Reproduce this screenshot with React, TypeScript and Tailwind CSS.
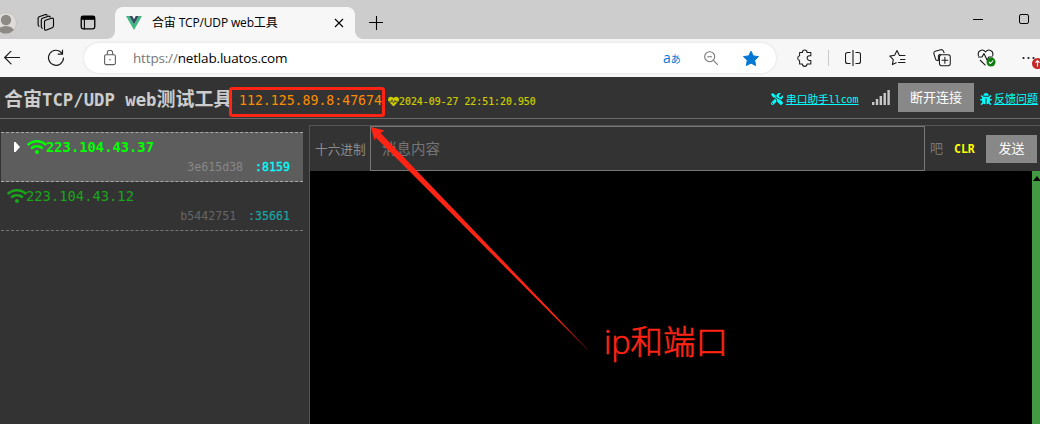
import type { ReactNode } from 'react';
import { FaBug, FaHeartbeat, FaTools, FaWifi } from 'react-icons/fa';

const ui = "font-['Open_Sans','Noto_Sans_CJK_SC',sans-serif]";
const mono = "font-['DejaVu_Sans_Mono','Noto_Sans_CJK_SC',monospace]";

function Icon({ className, children }: { className: string; children: ReactNode }) {
  return (
    <svg viewBox="0 0 20 20" fill="none" stroke="currentColor" strokeWidth="1.15" strokeLinecap="round" strokeLinejoin="round" className={`block shrink-0 ${className}`}>
      {children}
    </svg>
  );
}

function TabBar() {
  return (
    <div className="flex h-[39px] items-start bg-[#cdcdcd] text-black">
      <svg viewBox="0 0 22 22" className="mt-3 -ml-[5px] block size-[22px] shrink-0">
        <defs><clipPath id="avatar"><circle cx="11" cy="11" r="10.5" /></clipPath></defs>
        <circle cx="11" cy="11" r="10.5" fill="#dedbd8" stroke="#c6c3c0" />
        <g clipPath="url(#avatar)" fill="#8d8985">
          <circle cx="11" cy="8" r="5.2" />
          <ellipse cx="11" cy="19.5" rx="8" ry="5.5" />
        </g>
      </svg>
      <svg viewBox="0 0 18 18" fill="none" stroke="currentColor" strokeWidth="1.1" strokeLinecap="round" strokeLinejoin="round" className="mt-[14px] ml-5 block size-[18px] shrink-0">
        <path d="M8.500 6.200 14.500 4.200Q16.500 3.700 16.500 5.500V12Q16.500 13.200 15.200 13.700L9.500 16Q7.500 16.700 7.500 14.700V7.700Q7.500 6.600 8.500 6.200Z" />
        <path d="M5.300 14.300Q4.300 13.800 4.300 12.700V6Q4.300 4.800 5.400 4.300L11.500 2.200Q12.800 1.900 13.200 3" />
        <path d="M2 12.200Q1.100 11.700 1.100 10.500V4.300Q1.100 3.100 2.200 2.700L8.500.600Q9.700.300 10.100 1.300" />
      </svg>
      <Icon className="mt-[14px] ml-[24px] size-[18px]">
        <rect x="2.5" y="2.5" width="15" height="14" rx="2" strokeWidth="1.5" />
        <path d="M2.5 4.5h15" strokeWidth="4" strokeLinecap="butt" />
        <path d="M6 6v10.500" strokeWidth="1.2" />
      </Icon>
      <div className="relative mt-[7px] ml-[18px] flex h-8 w-60 shrink-0 items-center rounded-t-[8px] bg-[#f7f7f7] pl-[11px]">
        <svg viewBox="0 0 8 8" className="absolute bottom-0 -left-2 size-2 text-[#f7f7f7]"><path d="M8 0v8H0a8 8 0 0 0 8-8" fill="currentColor" /></svg>
        <svg viewBox="0 0 8 8" className="absolute -right-2 bottom-0 size-2 text-[#f7f7f7]"><path d="M0 0v8h8a8 8 0 0 1-8-8" fill="currentColor" /></svg>
        <svg viewBox="0 0 16 14" className="block h-[14px] w-4 shrink-0">
          <path d="M0 0h3.2L8 8.3 12.8 0H16L8 14z" fill="#41b883" />
          <path d="M3.2 0h3L8 3.2 9.800 0h3L8 8.300z" fill="#35495e" />
        </svg>
        <span className={`${ui} ml-[10px] w-[182px] shrink-0 text-[12px] tracking-[-0.16px] leading-4 whitespace-nowrap`}>合宙 TCP/UDP web工具</span>
        <svg viewBox="0 0 10 10" className="block h-[10px] w-[10px] shrink-0" stroke="currentColor" strokeWidth="1.1"><path d="m1 1 8 8M9 1 1 9" /></svg>
      </div>
      <svg viewBox="0 0 14 14" className="mt-4 ml-[14px] block size-[14px] shrink-0" stroke="currentColor" strokeWidth="1.1"><path d="M7.500 0v14M0 6.500h14" /></svg>
      <div className="grow" />
      <svg viewBox="0 0 10 10" className="mt-[14px] block size-[10px]" stroke="currentColor"><path d="M0 5.500h10" /></svg>
      <svg viewBox="0 0 10 10" className="mt-[14px] mr-[11px] ml-9 block size-[10px]" stroke="currentColor" fill="none"><rect x=".5" y=".5" width="9" height="9" rx="1.500" /></svg>
    </div>
  );
}

function AddressBar() {
  return (
    <div className="flex h-[38px] items-center bg-[#f7f7f7] text-[#1b1b1b]">
      <svg viewBox="0 0 16 14" fill="none" stroke="currentColor" strokeWidth="1.200" strokeLinecap="round" strokeLinejoin="round" className="ml-1 block h-[14px] w-4 shrink-0"><path d="M15.500 6.500H.7M7 .200.700 6.500 7 12.800" /></svg>
      <svg viewBox="0 0 18 18" fill="none" stroke="currentColor" strokeWidth="1.200" strokeLinecap="round" className="ml-[27px] block size-[18px] shrink-0"><path d="M14.800 4A7.500 7.500 0 1 0 16.500 9M15.500 1v4.200h-4.300" /></svg>
      <div className="ml-[19px] flex h-[30px] w-[692px] shrink-0 items-center rounded-full bg-white shadow-[0_0_3px_rgba(0,0,0,.12)]">
        <svg viewBox="0 0 12 16" fill="none" stroke="#5e5e5e" strokeWidth="1.100" className="ml-5 block h-4 w-3 shrink-0"><rect x=".6" y="4.800" width="10.800" height="9.800" rx="1.500" /><path d="M3.300 4.800V3a2.700 2.700 0 0 1 5.400 0v1.800" /><circle cx="6" cy="9.700" r=".8" fill="#5e5e5e" stroke="none" /></svg>
        <span className={`${ui} ml-[17px] w-[530px] text-[13.500px] leading-5 tracking-[-0.17px] whitespace-nowrap`}><span className="text-[#767676]">https://</span><span className="text-black">netlab.luatos.com</span></span>
        <span className={`${ui} w-[18px] text-[11px] leading-4 whitespace-nowrap text-[#0078d4]`}><span className="text-[14px]">a</span><span className="text-[10px]">あ</span></span>
        <svg viewBox="0 0 14 14" fill="none" stroke="#767676" strokeWidth="1.100" className="ml-[23px] block size-[14px] shrink-0"><circle cx="5.700" cy="5.700" r="5" /><path d="m9.300 9.300 4.500 4.500M3.300 5.700h4.800" /></svg>
        <svg viewBox="0 0 18 17" className="ml-[24px] block h-[17px] w-[18px] shrink-0"><path d="m9 1.200 2.300 4.700 5.200.7-3.800 3.700.9 5.200L9 13.100l-4.600 2.400.9-5.200-3.800-3.700 5.200-.7z" fill="#0078d4" stroke="#0078d4" strokeLinejoin="round" /></svg>
      </div>
      <Icon className="ml-5 size-[18px]"><path d="M4 3.800H7.100A2.600 2.600 0 0 1 12.300 3.800H16.500V7.400H15A2.400 2.400 0 0 0 15 12.700H16.500V16.700H12.300A2.600 2.600 0 0 1 7.100 16.700H4V12.700A2.600 2.600 0 0 1 4 7.600Z" /></Icon>
      <div className="ml-[14px] h-4 w-px bg-[#c9c9c9]" />
      <svg viewBox="0 0 16 16" fill="none" stroke="currentColor" strokeWidth="1.100" className="ml-4 block size-4 shrink-0"><path d="M5.500 2.500H2.500a2 2 0 0 0-2 2v7a2 2 0 0 0 2 2H5.500M10.500 2.500h3a2 2 0 0 1 2 2v7a2 2 0 0 1-2 2h-3M8 0v16" /></svg>
      <svg viewBox="0 0 18 18" fill="none" stroke="currentColor" strokeWidth="1.100" strokeLinejoin="round" strokeLinecap="round" className="ml-[28px] block size-[18px] shrink-0"><path d="M12 6.500 10.300 6.300 8 1.500 5.600 6.300.800 7.100 4.300 10.600 3.400 15.600 7.200 13.700M10.500 6.500H16M11.500 10.500H16M9.500 13.500H16" /></svg>
      <Icon className="ml-[26px] size-[18px]"><path d="M5.500 13 3.200 12 1 5.300c-.4-1.400.2-2.400 1.500-2.900l6-1.600c1.400-.4 2.400.2 3 1.300l.8 2" /><path d="M6 12.500V8a2.200 2.200 0 0 1 2.200-2.200" /><rect x="7.200" y="6.500" width="12" height="12" rx="2.400" /><path d="M13.200 9.300v6.400M10 12.500h6.400" /></Icon>
      <svg viewBox="0 0 20 18" fill="none" stroke="currentColor" strokeWidth="1.100" strokeLinejoin="round" className="ml-[26px] block h-[18px] w-5 shrink-0"><path d="M1.500 7C-.2 1 6-.6 8.500 3 11-.6 17.300 1 15.600 7M1 8h4l2-3.400 3 6.400 1.800-3h4M3 11l5.500 5.400" /><circle cx="14" cy="13" r="4.500" fill="#107c10" stroke="none" /><path d="m12 13 1.500 1.500 2.700-3" stroke="white" /></svg>
      <div className="ml-[25px] h-[18px] w-[18px] shrink-0">
        <svg viewBox="0 0 18 18" className="block size-[18px] overflow-visible"><g fill="currentColor"><circle cx="1.500" cy="9" r="1.100" /><circle cx="6.500" cy="9" r="1.100" /><circle cx="11.500" cy="9" r="1.100" /></g><circle cx="15.500" cy="14.500" r="5.500" fill="#c62828" /><path d="M15.500 17.500v-5.800m-2 2 2-2 2 2" fill="none" stroke="white" strokeWidth="1.200" /></svg>
      </div>
    </div>
  );
}

function SignalBars() {
  return (
    <svg viewBox="0 0 18 15" className="block h-[15px] w-[18px] shrink-0" fill="#c9c9c9">
      <path d="M0 12h2.400v3H0zM3.800 9h2.400v6H3.800zM7.600 6H10v9H7.600zM11.500 3h2.400v12h-2.400zM15.400 0h2.400v15h-2.400z" />
    </svg>
  );
}

function PageHeader() {
  return (
    <header className={`${mono} flex h-[42px] items-center border-b border-[#696969]`}>
      <h1 className="ml-[4px] w-[227px] shrink-0 pt-[3px] text-[19px] leading-7 font-bold whitespace-nowrap text-[#ccc]">
        合宙<span className="text-[17.300px]">TCP/UDP web</span>测试工具
      </h1>
      <div className="mt-[9px] -ml-[2px] flex h-[30px] w-[156px] shrink-0 items-center rounded-[3px] border-[3px] border-[#ff2414] pb-[2px] pl-[7px] text-[13.200px] whitespace-nowrap text-[#ff8c00]">112.125.89.8:47674</div>
      <FaHeartbeat className="mt-[7px] ml-[3px] size-[11px] shrink-0 text-[#cccc00]" />
      <span className="mt-[9px] text-[9.900px] whitespace-nowrap text-[#cccc00] [-webkit-text-stroke:0.2px]">2024-09-27 22:51:20.950</span>
      <div className="grow" />
      <FaTools className="mt-[2px] size-[12px] shrink-0 text-[#00ffff]" />
      <a className="mt-[5px] ml-[3px] w-[73px] shrink-0 text-[10.700px] whitespace-nowrap text-[#00ffff] underline">串口助手<span className="text-[9.900px]">llcom</span></a>
      <div className="ml-[13px]"><SignalBars /></div>
      <button className="mr-[6px] ml-[8px] h-[29px] w-[76px] shrink-0 bg-[#888] text-[13px] whitespace-nowrap text-white">断开连接</button>
      <FaBug className="mt-[2px] size-[12px] shrink-0 text-[#00ffff]" />
      <a className="mt-[5px] mr-[2px] ml-[2px] w-11 shrink-0 text-[11px] whitespace-nowrap text-[#00ffff] underline">反馈问题</a>
    </header>
  );
}

function ClientList() {
  return (
    <aside className={`${mono} w-[309px] shrink-0 pt-[13px] pl-px`}>
      <div className="h-[50px] w-[302px] border-y border-dashed border-[#aaa] bg-[#5d5d5d]">
        <div className="flex h-7 items-center pl-[13px]">
          <svg viewBox="0 0 6 10" className="block h-[10px] w-[6px] shrink-0" fill="white"><path d="M0 0h1.500L6 5l-4.500 5H0z" /></svg>
          <FaWifi className="ml-[7px] h-[16px] w-[20px] text-[#00ff00]" />
          <span className="-ml-px text-[13.800px] font-bold text-[#00ff00]">223.104.43.37</span>
        </div>
        <div className="flex h-3 items-center justify-end pt-[2px] pr-[13px] text-[11.600px]"><span className="text-[#888]">3e615d38</span><span className="ml-[12px] text-[#00ffff] [-webkit-text-stroke:0.3px]">:8159</span></div>
      </div>
      <div className="h-[49px] w-[302px] border-b border-dashed border-[#777]">
        <div className="flex h-7 items-center pl-[6px]">
          <FaWifi className="h-[16px] w-[20px] text-[#1aa51a]" />
          <span className="-ml-px text-[13.800px] text-[#1aa51a]">223.104.43.12</span>
        </div>
        <div className="flex h-3 items-center justify-end pt-[2px] pr-[13px] text-[11.600px]"><span className="text-[#666]">b5442751</span><span className="ml-[12px] text-[#1aa5a5] [-webkit-text-stroke:0.2px]">:35661</span></div>
      </div>
    </aside>
  );
}

function MessagePanel() {
  return (
    <main className={`${mono} mt-[6px] flex grow flex-col border-t border-l border-[#555]`}>
      <div className="flex h-[45px] shrink-0 items-center">
        <span className="ml-[5px] w-[55px] shrink-0 pt-[2px] text-[12.700px] whitespace-nowrap text-[#8c8c8c]">十六进制</span>
        <div className="flex h-[45px] w-[555px] shrink-0 items-center border border-[#777] pt-[2px] pl-[11px] text-[14.500px] text-[#757575]">消息内容</div>
        <span className="ml-[5px] w-[13px] text-[13px] text-[#777]">吧</span>
        <span className="ml-[11px] w-[22px] pt-[2px] text-[11.500px] font-bold text-[#ffff00]">CLR</span>
        <button className="ml-[10px] h-7 w-[51px] bg-[#888] text-[13px] text-white">发送</button>
      </div>
      <div className="flex grow justify-end bg-black">
        <div className="w-2 bg-[#439a43]"><svg viewBox="0 0 8 5" className="mt-[5px] block h-[5px] w-2"><path d="M1 5 5 0l3 4v1z" fill="black" /></svg></div>
      </div>
    </main>
  );
}

export default function App() {
  return (
    <div className="relative flex h-[424px] w-[1040px] flex-col overflow-hidden bg-[#333]">
      <TabBar />
      <AddressBar />
      <PageHeader />
      <div className="flex grow"><ClientList /><MessagePanel /></div>
      <svg viewBox="0 0 1040 424" className="pointer-events-none absolute inset-0 h-[424px] w-[1040px]">
        <defs><linearGradient id="tail" x1="371" y1="127" x2="587" y2="349" gradientUnits="userSpaceOnUse"><stop offset=".85" stopColor="#ff2414" /><stop offset="1" stopColor="#ff2414" stopOpacity=".3" /></linearGradient></defs>
        <path d="M371 127 384.500 130.500 380.500 133 588 349.500 587.500 350 375.800 137.500 374.500 140.500z" fill="url(#tail)" />
      </svg>
      <div className="absolute top-[317px] left-[604px] font-['Open_Sans','Noto_Sans_CJK_SC',sans-serif] text-[32.400px] leading-[48px] font-light whitespace-nowrap text-[#ff2414] [-webkit-text-stroke:0.6px]">ip和端口</div>
    </div>
  );
}
